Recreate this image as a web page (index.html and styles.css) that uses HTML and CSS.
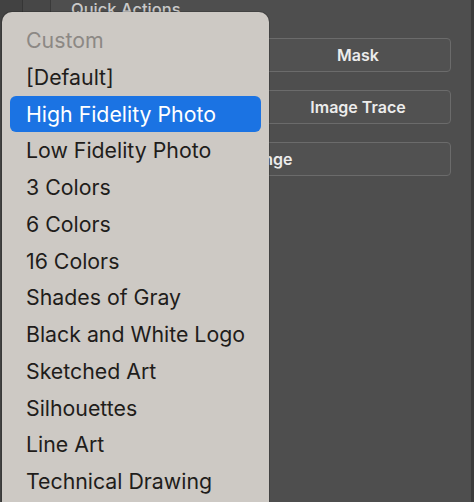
FILE: index.html
```html
<!DOCTYPE html>
<html>
<head>
<meta charset="utf-8">
<link rel="stylesheet" href="styles.css">
</head>
<body>
<div class="app">
  <div class="strip"></div>
  <div class="rail"></div>
  <div class="panel">
    <div class="heading">Quick Actions</div>
    <div class="actions">
      <button class="btn">Expand</button>
      <button class="btn">Mask</button>
      <button class="btn">Embed</button>
      <button class="btn">Image Trace</button>
      <button class="btn wide">Arrange</button>
    </div>
  </div>
  <div class="edge"></div>
</div>
<ul class="menu">
  <li class="item disabled">Custom</li>
  <li class="item">[Default]</li>
  <li class="item selected">High Fidelity Photo</li>
  <li class="item">Low Fidelity Photo</li>
  <li class="item">3 Colors</li>
  <li class="item">6 Colors</li>
  <li class="item">16 Colors</li>
  <li class="item">Shades of Gray</li>
  <li class="item">Black and White Logo</li>
  <li class="item">Sketched Art</li>
  <li class="item">Silhouettes</li>
  <li class="item">Line Art</li>
  <li class="item">Technical Drawing</li>
</ul>
</body>
</html>
```
FILE: styles.css
```css
html, body {
  margin: 0;
  padding: 0;
  height: 100%;
  overflow: hidden;
}
body {
  background: #4d4d4d;
  font-family: Inter, "Noto Sans", "Liberation Sans", sans-serif;
}
.app {
  display: flex;
  height: 502px;
}
.strip {
  width: 22px;
  background: #424242;
  border-right: 1px solid #363636;
}
.rail {
  width: 27px;
  background: #474747;
  border-right: 1px solid #3a3a3a;
}
.panel {
  flex: 1;
  padding: 0 20px 0 20px;
  background: #4e4e4e;
}
.edge {
  width: 3px;
  background: #3c3c3c;
}
.heading {
  color: #c9c9c9;
  font-size: 16.5px;
  font-weight: 500;
  line-height: 20px;
  margin-top: -1px;
  height: 19px;
}
.actions {
  margin-top: 20px;
  display: grid;
  grid-template-columns: 1fr 1fr;
  column-gap: 8px;
  row-gap: 18px;
}
.btn {
  height: 34px;
  background: #515151;
  border: 1px solid #6b6b6b;
  border-radius: 4px;
  color: #ececec;
  font-family: inherit;
  font-size: 16px;
  font-weight: 600;
  padding: 0;
}
.wide {
  grid-column: 1 / 3;
}
.menu {
  position: absolute;
  left: 2px;
  top: 12px;
  width: 267px;
  height: 490px;
  margin: 0;
  padding: 10px 8px 0;
  box-sizing: border-box;
  list-style: none;
  background: #cdc9c4;
  border-radius: 10px 10px 0 0;
  box-shadow: 0 0 0 1px rgba(0,0,0,0.15);
}
.item {
  height: 36.75px;
  line-height: 36.75px;
  padding-left: 16px;
  font-size: 21.3px;
  color: #1f1d1b;
  border-radius: 6px;
  white-space: nowrap;
}
.disabled {
  color: #8c8884;
}
.selected {
  background: #1b73e3;
  color: #ffffff;
}
```
